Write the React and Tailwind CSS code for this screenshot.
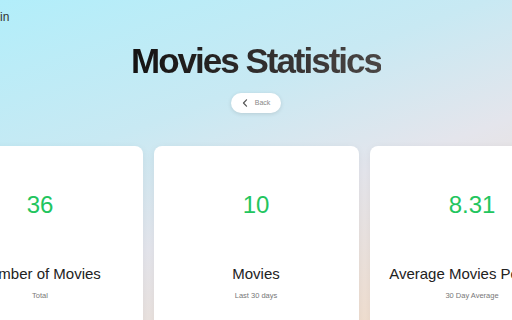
import React from 'react';

const stats = [
  { value: '36', label: 'Number of Movies', sub: 'Total' },
  { value: '10', label: 'Movies', sub: 'Last 30 days' },
  { value: '8.31', label: 'Average Movies Per Day', sub: '30 Day Average' },
];

const StatCard = ({ value, label, sub }) => (
  <div className="w-[205px] h-[200px] shrink-0 bg-white rounded-lg shadow-[0_2px_8px_rgba(0,0,0,0.06)] flex flex-col items-center">
    <div className="mt-[45px] text-[24px] leading-[28px] text-[#22c55e]">{value}</div>
    <div className="mt-[45px] text-[15px] leading-[20px] text-[#222] whitespace-nowrap">{label}</div>
    <div className="mt-[6px] text-[7.5px] leading-[12px] text-[#777]">{sub}</div>
  </div>
);

export default function App() {
  return (
    <div
      className="w-[512px] h-[320px] overflow-hidden relative bg-[linear-gradient(160deg,#b2eefa_0%,#c8e9f3_35%,#e4e5ec_60%,#f4dcc6_100%)]"
      style={{ fontFamily: '"Liberation Sans", Arial, sans-serif' }}
    >
      <div className="absolute left-[-20px] top-[8px] text-[12px] text-[#333]">Login</div>

      <div className="flex flex-col items-center pt-[38px]">
        <h1 className="text-[35px] leading-[46px] font-bold tracking-[-2px] bg-[linear-gradient(90deg,#141212,#4a4645)] bg-clip-text text-transparent">
          Movies Statistics
        </h1>
        <button className="mt-[9px] w-[50px] h-[20px] rounded-full bg-white shadow-[0_1px_4px_rgba(0,0,0,0.12)] flex items-center justify-center gap-[7px]">
          <svg width="6" height="8" viewBox="0 0 6 8" fill="none" stroke="#555" strokeWidth="1.2" strokeLinecap="round" strokeLinejoin="round">
            <path d="M4.5 0.8 L1.5 4 L4.5 7.2" />
          </svg>
          <span className="text-[7px] text-[#888]">Back</span>
        </button>
      </div>

      <div className="flex justify-center gap-[11px] mt-[33px]">
        {stats.map((s) => (
          <StatCard key={s.label} {...s} />
        ))}
      </div>
    </div>
  );
}
